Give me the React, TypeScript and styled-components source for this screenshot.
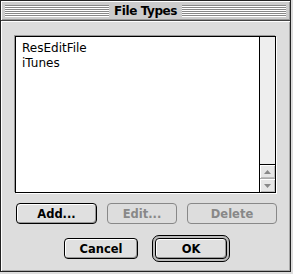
import styled, { createGlobalStyle } from "styled-components";

const Global = createGlobalStyle`
  html, body { margin: 0; padding: 0; background: #dddddd; }
  body { font-family: "DejaVu Sans", "Liberation Sans", sans-serif; }
`;

const Window = styled.div`
  box-sizing: border-box;
  width: 291px;
  height: 272px;
  border: 1px solid #222;
  background: #dddddd;
  display: flex;
  flex-direction: column;
`;

const TitleBar = styled.div`
  height: 19px;
  border-bottom: 1px solid #444;
  background: #cccccc;
  box-shadow: inset 1px 1px 0 #fff, inset -1px -1px 0 #999;
  display: flex;
  align-items: center;
  padding: 0 4px;
  gap: 5px;
`;

const Stripes = styled.div`
  flex: 1;
  height: 12px;
  background: repeating-linear-gradient(to bottom, #888 0 1px, #fff 1px 2px);
`;

const Title = styled.span`
  font-size: 12px;
  font-weight: bold;
  letter-spacing: -0.4px;
  color: #000;
  line-height: 12px;
`;

const Body = styled.div`
  flex: 1;
  display: flex;
  flex-direction: column;
  padding: 15px 0 0 14px;
  box-shadow: inset 1px 1px 0 #fff, inset -1px -1px 0 #aaa;
`;

const ListBox = styled.div`
  box-sizing: border-box;
  width: 261px;
  height: 157px;
  border: 1px solid #000;
  background: #fff;
  display: flex;
  box-shadow: -1px -1px 0 #999, 1px 1px 0 #fff;
`;

const Items = styled.div`
  flex: 1;
  padding: 4px 0 0 6px;
  display: flex;
  flex-direction: column;
`;

const Item = styled.div`
  font-size: 12px;
  line-height: 15px;
  color: #000;
`;

const ScrollBar = styled.div`
  width: 15px;
  border-left: 1px solid #000;
  display: flex;
  flex-direction: column;
  background: #eeeeee;
`;

const Track = styled.div`
  flex: 1;
`;

const Arrow = styled.div<{ $up?: boolean }>`
  height: 13px;
  border-top: 1px solid ${(p) => (p.$up ? "#000" : "#aaa")};
  display: flex;
  align-items: center;
  justify-content: center;
  background: #e6e6e6;
  box-shadow: inset 1px 1px 0 #fff, inset -1px -1px 0 #bbb;
`;

const Row = styled.div<{ $top: number; $left: number; $gap: number }>`
  display: flex;
  align-items: center;
  margin-top: ${(p) => p.$top}px;
  margin-left: ${(p) => p.$left}px;
  gap: ${(p) => p.$gap}px;
`;

const Button = styled.button<{ $w: number }>`
  box-sizing: border-box;
  width: ${(p) => p.$w}px;
  height: 21px;
  padding: 0;
  border: 1px solid #000;
  border-radius: 4px;
  background: #e0e0e0;
  box-shadow: inset 1px 1px 0 #fff, inset -1px -1px 0 #999;
  font-family: "DejaVu Sans", "Liberation Sans", sans-serif;
  font-size: 11.5px;
  font-weight: bold;
  color: #000;
  &:disabled {
    border-color: #888;
    background: #dddddd;
    box-shadow: none;
    color: #888;
  }
`;

const DefaultRing = styled.div`
  box-sizing: border-box;
  padding: 2px;
  border: 1px solid #000;
  border-radius: 7px;
  background: #bbbbbb;
  display: flex;
`;

function Tri({ up }: { up?: boolean }) {
  return (
    <svg width="7" height="4" viewBox="0 0 7 4">
      <polygon points={up ? "3.5,0 7,4 0,4" : "0,0 7,0 3.5,4"} fill="#888" />
    </svg>
  );
}

export default function App() {
  return (
    <>
      <Global />
      <Window>
        <TitleBar>
          <Stripes />
          <Title>File Types</Title>
          <Stripes />
        </TitleBar>
        <Body>
          <ListBox>
            <Items>
              <Item>ResEditFile</Item>
              <Item>iTunes</Item>
            </Items>
            <ScrollBar>
              <Track />
              <Arrow $up>
                <Tri up />
              </Arrow>
              <Arrow>
                <Tri />
              </Arrow>
            </ScrollBar>
          </ListBox>
          <Row $top={10} $left={1} $gap={10}>
            <Button $w={81}>Add...</Button>
            <Button $w={70} disabled>
              Edit...
            </Button>
            <Button $w={90} disabled>
              Delete
            </Button>
          </Row>
          <Row $top={11} $left={49} $gap={14}>
            <Button $w={74}>Cancel</Button>
            <DefaultRing>
              <Button $w={72}>OK</Button>
            </DefaultRing>
          </Row>
        </Body>
      </Window>
    </>
  );
}
